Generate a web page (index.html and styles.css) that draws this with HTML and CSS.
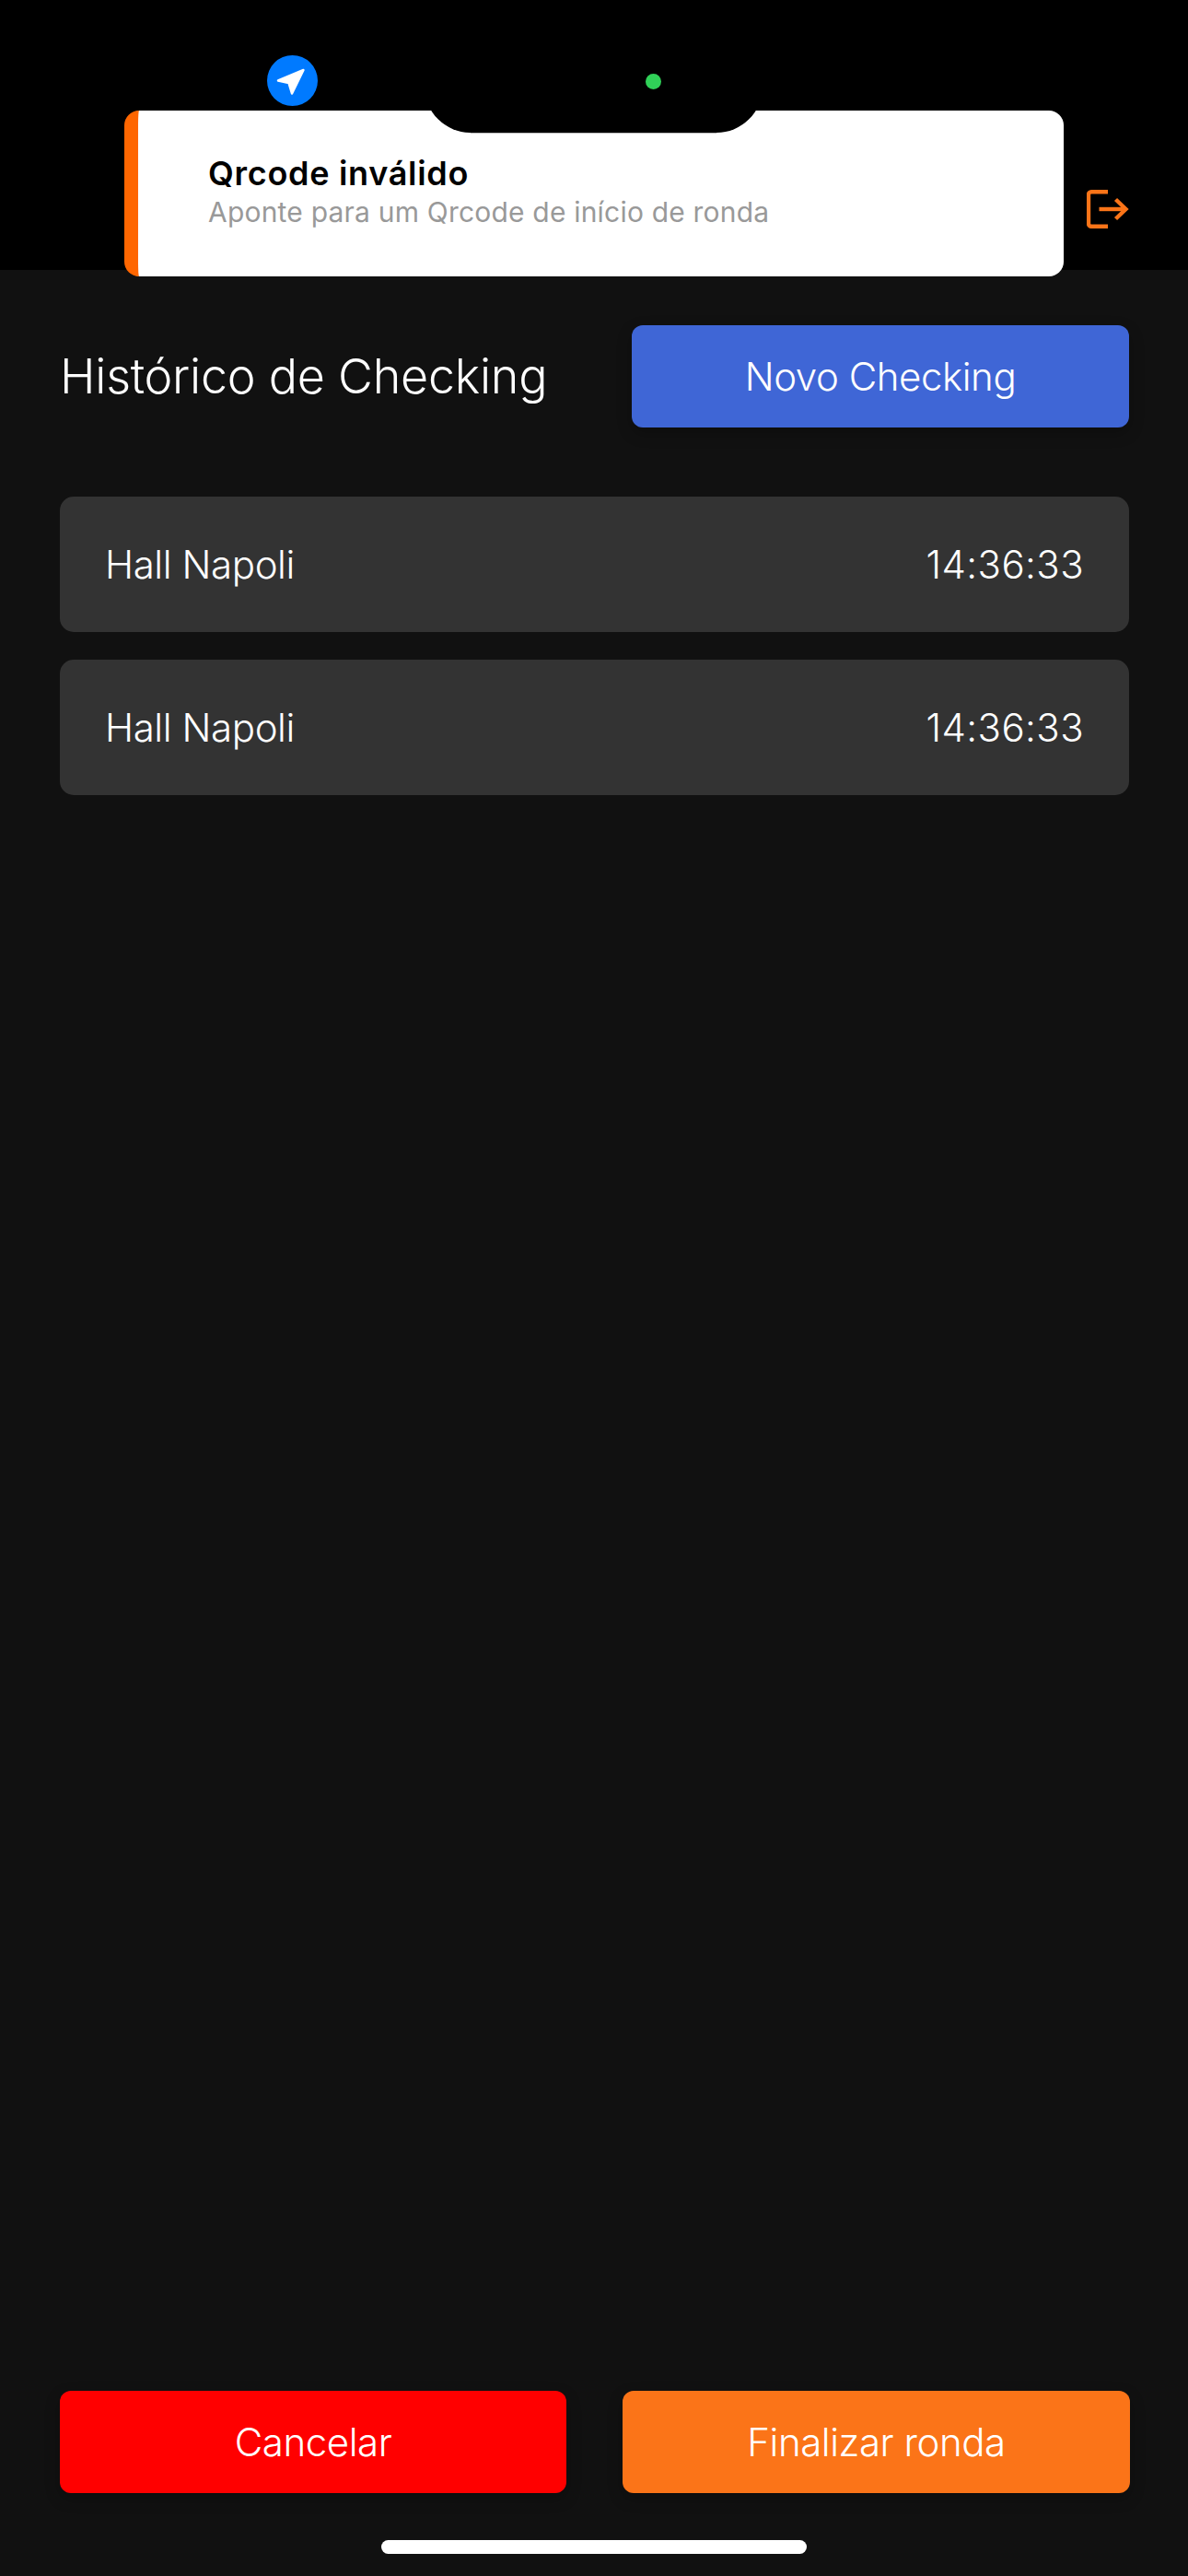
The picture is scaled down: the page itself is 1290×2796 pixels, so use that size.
FILE: index.html
```html
<!DOCTYPE html>
<html lang="pt-BR">
<head>
    <meta charset="UTF-8">
    <title>Histórico de Checking</title>
    <link rel="stylesheet" href="styles.css">
</head>
<body>
    <div class="screen">
        <header class="topbar">
            <svg class="exit-icon" width="46" height="42" viewBox="0 0 46 42" fill="none" stroke="#fb7418" stroke-width="4.4">
                <path d="M23 2.2H5a3 3 0 0 0-3 3v31.600a3 3 0 0 0 3 3h18"/>
                <path d="M13.500 21H42"/>
                <path d="M31.500 10.500L42.500 21L31.500 31.500"/>
            </svg>
        </header>

        <div class="notch"><span class="camera-dot"></span></div>

        <svg class="location-icon" width="55" height="55" viewBox="0 0 55 55">
            <circle cx="27.500" cy="27.500" r="27.500" fill="#007aff"/>
            <path d="M39.500 16L12 27.500L23.500 30L27 41.500Z" fill="#fff" stroke="#fff" stroke-width="2.500" stroke-linejoin="round"/>
        </svg>

        <div class="toast">
            <p class="toast-title">Qrcode inválido</p>
            <p class="toast-text">Aponte para um Qrcode de início de ronda</p>
        </div>

        <main class="content">
            <div class="title-row">
                <h1>Histórico de Checking</h1>
                <button class="btn btn-new">Novo Checking</button>
            </div>

            <ul class="history">
                <li class="history-item"><span>Hall Napoli</span><span class="history-time">14:36:33</span></li>
                <li class="history-item"><span>Hall Napoli</span><span class="history-time">14:36:33</span></li>
            </ul>
        </main>

        <footer class="actions">
            <button class="btn btn-cancel">Cancelar</button>
            <button class="btn btn-finish">Finalizar ronda</button>
        </footer>

        <div class="home-bar"></div>
    </div>
</body>
</html>
```

FILE: styles.css
```css
* {
    box-sizing: border-box;
}
html, body {
    margin: 0;
    padding: 0;
}
body {
    font-family: Inter, "Liberation Sans", sans-serif;
    background-color: #111111;
    color: #ffffff;
}
.screen {
    position: relative;
    width: 1290px;
    height: 2796px;
    display: flex;
    flex-direction: column;
    overflow: hidden;
}
.topbar {
    height: 293px;
    background: #000000;
    display: flex;
    justify-content: flex-end;
    align-items: flex-start;
    padding: 206px 64px 0 0;
    flex-shrink: 0;
}
.notch {
    position: absolute;
    top: 0;
    left: 461px;
    width: 367px;
    height: 144px;
    background: #000000;
    border-radius: 0 0 50px 50px;
    z-index: 3;
}
.notch::after {
    content: "";
    position: absolute;
    left: 50px;
    right: 50px;
    bottom: -1px;
    height: 1px;
    background: #bdbdbd;
}
.camera-dot {
    position: absolute;
    top: 80px;
    left: 240px;
    width: 17px;
    height: 17px;
    border-radius: 50%;
    background: #30d158;
}
.location-icon {
    position: absolute;
    top: 60px;
    left: 290px;
    z-index: 3;
}
.toast {
    position: absolute;
    top: 120px;
    left: 135px;
    width: 1020px;
    height: 180px;
    background: #ffffff;
    border-left: 15px solid #ff6600;
    border-radius: 16px;
    padding: 47px 0 0 76px;
    z-index: 2;
}
.toast p {
    margin: 0;
}
.toast-title {
    color: #000000;
    font-size: 36px;
    font-weight: 600;
    letter-spacing: 0.7px;
    line-height: 42px;
}
.toast-text {
    color: #999999;
    font-size: 30px;
    letter-spacing: 0.2px;
    line-height: 42px;
    margin-top: 2px;
}
.content {
    flex: 1;
    padding: 60px 64px 0 65px;
}
.title-row {
    display: flex;
    justify-content: space-between;
    align-items: center;
}
h1 {
    margin: 0;
    font-size: 52px;
    font-weight: 300;
    letter-spacing: -0.25px;
}
.btn {
    height: 111px;
    border: none;
    border-radius: 12px;
    color: #ffffff;
    font-family: inherit;
    font-size: 42px;
    font-weight: 300;
    letter-spacing: -0.45px;
    box-shadow: 0 6px 16px rgba(0, 0, 0, 0.25);
}
.btn-new {
    width: 540px;
    background: #3f66d6;
}
.history {
    list-style: none;
    margin: 75px 0 0;
    padding: 0;
    display: flex;
    flex-direction: column;
    gap: 30px;
}
.history-item {
    height: 147px;
    background: #333333;
    border-radius: 15px;
    padding: 0 49px;
    display: flex;
    justify-content: space-between;
    align-items: center;
    font-size: 42px;
    font-weight: 300;
    letter-spacing: -0.4px;
}
.history-time {
    letter-spacing: 0.4px;
}
.actions {
    display: grid;
    grid-template-columns: 550px 551px;
    gap: 61px;
    padding: 0 64px 0 65px;
    flex-shrink: 0;
}
.btn-cancel {
    background: #ff0000;
}
.btn-finish {
    background: #fb7418;
}
.home-bar {
    width: 462px;
    height: 15px;
    margin: 51px auto 24px;
    background: #ffffff;
    border-radius: 8px;
    flex-shrink: 0;
}
```
